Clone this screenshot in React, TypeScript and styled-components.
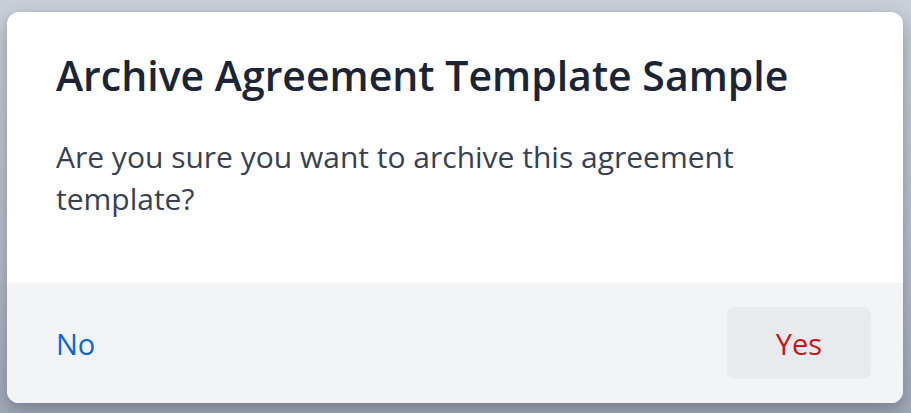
import React from 'react'
import styled, { createGlobalStyle } from 'styled-components'

const GlobalStyle = createGlobalStyle`
  html, body {
    margin: 0;
    height: 100%;
  }
  body {
    background: linear-gradient(180deg, #c9d0d8 0%, #b9c0ca 60%, #a3abb8 100%);
    font-family: "Open Sans", "Noto Sans", "Liberation Sans", sans-serif;
  }
`

const Backdrop = styled.div`
  width: 911px;
  height: 413px;
  box-sizing: border-box;
  padding: 12px 8px 10px 7px;
  display: flex;
`

const Dialog = styled.div`
  flex: 1;
  display: flex;
  flex-direction: column;
  background: #ffffff;
  border-radius: 12px;
  overflow: hidden;
  box-shadow: 0 10px 25px rgba(30, 40, 60, 0.25), 0 4px 10px rgba(30, 40, 60, 0.12);
`

const Content = styled.div`
  flex: 1;
  padding: 35px 49px 0 49px;
`

const Title = styled.h2`
  margin: 0 0 33px 0;
  font-size: 41px;
  line-height: 56px;
  font-weight: 600;
  color: #1b2535;
`

const Message = styled.p`
  margin: 0;
  font-size: 30px;
  line-height: 42px;
  font-weight: 400;
  color: #374151;
  max-width: 760px;
`

const Footer = styled.div`
  height: 120px;
  box-sizing: border-box;
  background: #f3f4f6;
  display: flex;
  align-items: center;
  justify-content: space-between;
  padding: 24px 32px 24px 0;
`

const ActionButton = styled.button<{ $tone: 'primary' | 'danger'; $filled?: boolean }>`
  height: 72px;
  padding: 0 49px;
  border: none;
  border-radius: 8px;
  background: ${p => (p.$filled ? '#e8ebee' : 'transparent')};
  color: ${p => (p.$tone === 'danger' ? '#cc1414' : '#0a66d8')};
  font-family: inherit;
  font-size: 29px;
  font-weight: 500;
  cursor: pointer;
`

const App = () => {
  return (
    <>
      <GlobalStyle />
      <Backdrop>
        <Dialog role="dialog" aria-labelledby="archive-title">
          <Content>
            <Title id="archive-title">Archive Agreement Template Sample</Title>
            <Message>Are you sure you want to archive this agreement template?</Message>
          </Content>
          <Footer>
            <ActionButton $tone="primary">No</ActionButton>
            <ActionButton $tone="danger" $filled>Yes</ActionButton>
          </Footer>
        </Dialog>
      </Backdrop>
    </>
  )
}

export default App
